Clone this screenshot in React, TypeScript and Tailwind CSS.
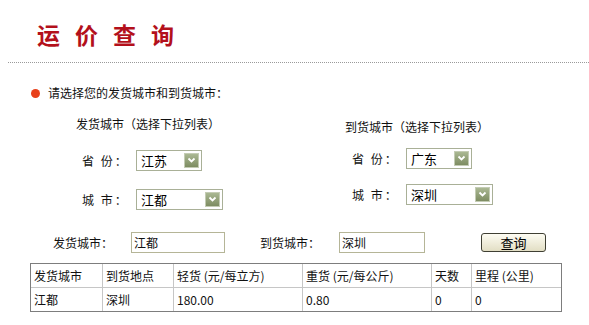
import React from 'react';

const FONT = "font-['Noto_Sans_CJK_SC','Noto_Sans',sans-serif]";

function FakeSelect({ value, width }: { value: string; width: string }) {
  return (
    <div className={`${width} h-[21px] flex items-center border border-[#a9b097] bg-white pl-[4px] pr-[2px]`}>
      <span className="text-[13px] leading-[16px] text-black">{value}</span>
      <div className="ml-auto w-[15px] h-[15px] border border-[#c4ccb4] bg-gradient-to-b from-[#aab893] to-[#7e8d62] flex items-center justify-center">
        <svg width="9" height="7" viewBox="0 0 9 7">
          <path d="M1.5 1.5 L4.5 4.5 L7.5 1.5" stroke="#fff" strokeWidth="1.8" fill="none" />
        </svg>
      </div>
    </div>
  );
}

function FieldRow({ label, children, className }: { label: string; children: React.ReactNode; className: string }) {
  return (
    <div className={`flex items-center ${className}`}>
      <span className="w-[54px] text-[12px] leading-[16px] tracking-[2px] whitespace-pre">{label}</span>
      {children}
    </div>
  );
}

const headers = ['发货城市', '到货地点', '轻货 (元/每立方)', '重货 (元/每公斤)', '天数', '里程 (公里)'];
const row = ['江都', '深圳', '180.00', '0.80', '0', '0'];
const widths = ['w-[72px]', 'w-[71px]', 'w-[129px]', 'w-[129px]', 'w-[40px]', 'w-[89px]'];

export default function App() {
  return (
    <div className={`w-[589px] h-[325px] bg-white text-[#111] overflow-hidden ${FONT}`}>
      {/* Title */}
      <h1 className="pl-[37px] pt-[22px] text-[23px] leading-[24px] font-bold tracking-[15px] text-[#b3101b]">
        运价查询
      </h1>
      <div className="ml-2 mt-[16px] border-t border-dotted border-[#9a9a9a]" />

      {/* Hint */}
      <div className="flex items-center mt-[22px] pl-[31px] h-[16px]">
        <span className="w-[9px] h-[9px] rounded-full bg-[#e8401a]" />
        <span className="ml-[8px] text-[12px] leading-[16px]">请选择您的发货城市和到货城市：</span>
      </div>

      {/* City pickers */}
      <div className="flex mt-[15px]">
        <div className="w-[269px] pl-[76px]">
          <div className="text-[12px] leading-[16px]">发货城市（选择下拉列表）</div>
          <FieldRow label="省 份：" className="ml-[6px] mt-[18px]">
            <FakeSelect value="江苏" width="w-[66px]" />
          </FieldRow>
          <FieldRow label="城 市：" className="ml-[6px] mt-[18px]">
            <FakeSelect value="江都" width="w-[87px]" />
          </FieldRow>
        </div>
        <div className="pl-[76px]">
          <div className="mt-[3px] text-[12px] leading-[16px]">到货城市（选择下拉列表）</div>
          <FieldRow label="省 份：" className="ml-[7px] mt-[13px]">
            <FakeSelect value="广东" width="w-[66px]" />
          </FieldRow>
          <FieldRow label="城 市：" className="ml-[7px] mt-[15px]">
            <FakeSelect value="深圳" width="w-[87px]" />
          </FieldRow>
        </div>
      </div>

      {/* Query row */}
      <div className="flex items-center mt-[22px] pl-[53px] h-[21px]">
        <span className="w-[78px] text-[12px] leading-[16px]">发货城市：</span>
        <input
          readOnly
          value="江都"
          className="w-[94px] h-[21px] border border-[#b5b597] px-[2px] text-[12px] leading-[16px] outline-none"
        />
        <span className="ml-[35px] w-[79px] text-[12px] leading-[16px]">到货城市：</span>
        <input
          readOnly
          value="深圳"
          className="w-[86px] h-[21px] border border-[#b5b597] px-[2px] text-[12px] leading-[16px] outline-none"
        />
        <button className="ml-[56px] w-[65px] h-[19px] rounded-[3px] border border-[#3f3f33] bg-gradient-to-b from-[#fdfcf3] to-[#e2dec4] text-[13px] leading-[16px] text-black">
          查询
        </button>
      </div>

      {/* Result table */}
      <table className="ml-[30px] mt-[10px] w-[530px] border-separate border-spacing-0 border border-[#7d7d7d] text-[12px] leading-[16px] table-fixed">
        <tbody>
          <tr className="h-[24px]">
            {headers.map((h, i) => (
              <td
                key={h}
                className={`${widths[i]} pl-[3px] border-b border-[#c6c6c6] ${i < headers.length - 1 ? 'border-r' : ''}`}
              >
                {h}
              </td>
            ))}
          </tr>
          <tr className="h-[23px]">
            {row.map((c, i) => (
              <td key={i} className={`pl-[3px] border-[#c6c6c6] ${i < row.length - 1 ? 'border-r' : ''}`}>
                {c}
              </td>
            ))}
          </tr>
        </tbody>
      </table>
    </div>
  );
}
